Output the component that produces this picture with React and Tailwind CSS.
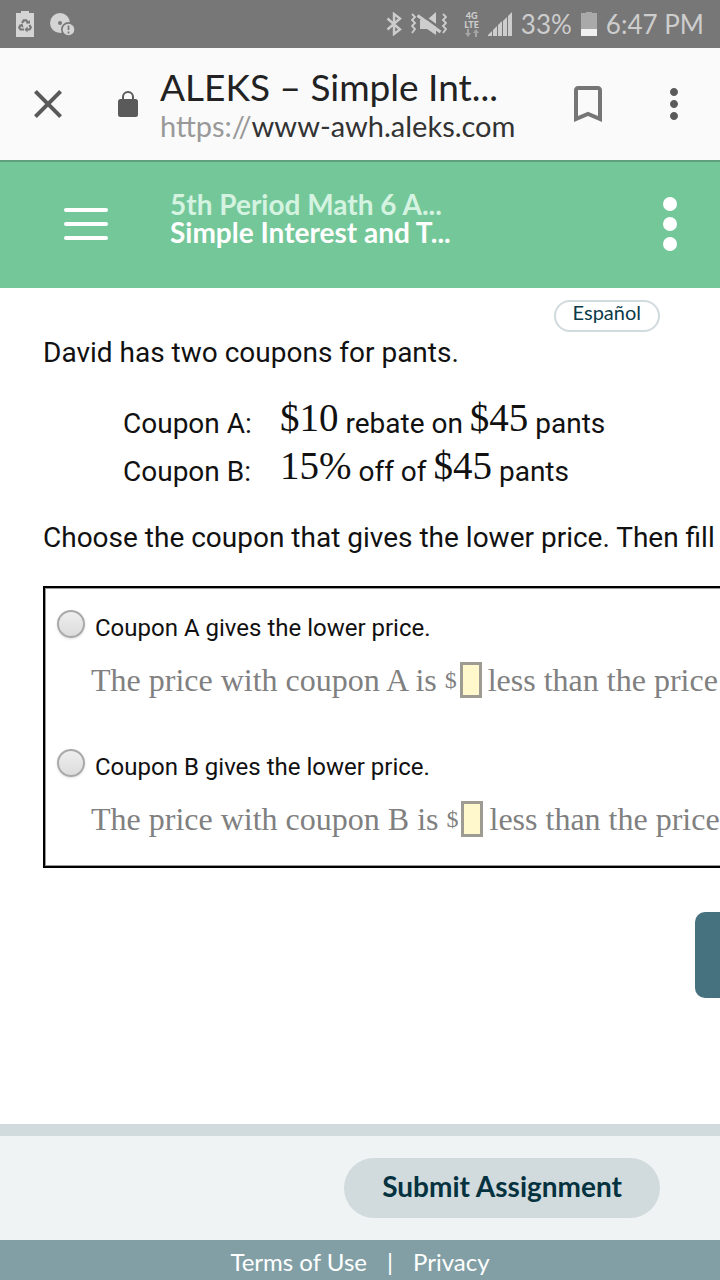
import React, { useState } from 'react';
import { MdClose, MdBookmarkBorder, MdMoreVert } from 'react-icons/md';

const options = [
  { id: 'A', offer: '$10', middle: 'rebate on', price: '$45' },
  { id: 'B', offer: '15%', middle: 'off of', price: '$45' },
];

const BatterySaverIcon = () => (
  <svg width="18" height="26" viewBox="0 0 18 26" aria-hidden="true">
    <path d="M0 2h5V0h8v2h5v24H0z" fill="#d4d4d4" />
    <g fill="none" stroke="#777" strokeWidth="2.2">
      <path d="M6 12l1.700-2.700h2.600l1.700 2.700" />
      <path d="M13.500 14l1.300 2.500-1.300 2h-2.500" />
      <path d="M8 18.500H4.500l-1.300-2 1.300-2" />
    </g>
    <path d="M10 12.500h4V9zM11.500 15.500v6l-3-3zM2.500 14l4-1.300 1 4z" fill="#777" />
  </svg>
);

const DiscAlertIcon = () => (
  <svg width="25" height="23" viewBox="0 0 25 23" aria-hidden="true">
    <circle cx="10" cy="10" r="10" fill="#d4d4d4" />
    <circle cx="10" cy="10" r="2" fill="#777" />
    <circle cx="18.500" cy="16.500" r="7.500" fill="#777" />
    <circle cx="18.500" cy="16.500" r="5.800" fill="#d4d4d4" />
    <path d="M18.500 12.500v4.500M18.500 18.500v2" stroke="#777" strokeWidth="1.700" />
  </svg>
);

const BluetoothIcon = () => (
  <svg width="16" height="24" viewBox="0 0 16 24" aria-hidden="true">
    <path
      d="M1.500 6.500l12.500 11-6 4.500V2l6 4.500-12.500 11"
      fill="none"
      stroke="#cdcdcd"
      strokeWidth="2.400"
    />
  </svg>
);

const VibrateMuteIcon = () => (
  <svg width="36" height="24" viewBox="0 0 36 24" aria-hidden="true">
    <path d="M9 8h7l9-8v23l-9-6H9z" fill="#cdcdcd" />
    <path d="M8 1l22 16" stroke="#777" strokeWidth="2.500" />
    <path d="M6.500 3.500l23 16.500" stroke="#cdcdcd" strokeWidth="3" />
    <path
      d="M1 2l3 3-3 3 3 3-3 3 3 3-3 4M32 2l3 3-3 3 3 3-3 3 3 3-3 4"
      fill="none"
      stroke="#cdcdcd"
      strokeWidth="1.800"
    />
  </svg>
);

const DataArrowsIcon = () => (
  <svg width="14" height="8" viewBox="0 0 14 8" aria-hidden="true" fill="#a6a6a6">
    <path d="M2 0h2v4h2L3 8 0 4h2zM10 8h2V4h2l-3-4-3 4h2z" />
  </svg>
);

const SignalIcon = () => (
  <svg width="24" height="24" viewBox="0 0 24 24" aria-hidden="true" fill="#cdcdcd">
    <path d="M0 24v-1l4-4v5zM5 24v-6l4-4v10zM10 24V13l4-4v15zM15 24V9l4-4v19zM20 24V4l4-4v24z" />
  </svg>
);

const BatteryIcon = () => (
  <svg width="16" height="24" viewBox="0 0 16 24" aria-hidden="true">
    <path d="M0 1h5V0h6v1h5v23H0z" fill="#a9a9a9" />
    <path d="M0 17h16v7H0z" fill="#efefef" />
  </svg>
);

const LockIcon = () => (
  <svg width="20" height="26" viewBox="0 0 20 26" className="shrink-0" aria-hidden="true">
    <path d="M5 9V6a5 5 0 0 1 10 0v3" fill="none" stroke="#5a5a5a" strokeWidth="2" />
    <rect y="8" width="20" height="18" rx="2.500" fill="#5a5a5a" />
  </svg>
);

const StatusBar = () => (
  <div className="flex h-12 items-center justify-between bg-[#777] px-4 font-['Lato',sans-serif] text-[26px] text-[#cdcdcd]">
    <div className="flex items-center gap-4">
      <BatterySaverIcon />
      <DiscAlertIcon />
    </div>
    <div className="flex items-center gap-[9px]">
      <BluetoothIcon />
      <VibrateMuteIcon />
      <div className="ml-2 flex flex-col items-center text-[9px] leading-[9px] font-black">
        <span>4G</span>
        <span>LTE</span>
        <DataArrowsIcon />
      </div>
      <SignalIcon />
      <span>33%</span>
      <BatteryIcon />
      <span>6:47 PM</span>
    </div>
  </div>
);

const BrowserBar = () => (
  <div className="flex h-28 items-center bg-[#fafafa] pr-[22px] pl-6 text-[#5a5a5a]">
    <button type="button" aria-label="Close tab">
      <MdClose size={48} />
    </button>
    <div className="ml-[46px]">
      <LockIcon />
    </div>
    <div className="ml-[22px] min-w-0 flex-1 pt-1 font-['Lato',sans-serif] whitespace-nowrap">
      <p className="text-[37px] leading-[40px] text-[#222]">ALEKS – Simple Int...</p>
      <p className="text-[29px] leading-[38px] text-[#999]">
        https://<span className="text-[#333]">www-awh.aleks.com</span>
      </p>
    </div>
    <button type="button" aria-label="Bookmark" className="mr-[38px] text-[#757575]">
      <MdBookmarkBorder size={48} />
    </button>
    <button type="button" aria-label="Browser menu">
      <MdMoreVert size={48} />
    </button>
  </div>
);

const CourseHeader = () => (
  <header className="flex h-32 items-center bg-[#74c798] pr-10 pl-16 font-['Lato',sans-serif] inset-shadow-[0_2px_0_#5f9f7e]">
    <button type="button" aria-label="Menu" className="flex w-11 flex-col gap-[10px]">
      <span className="h-1 rounded-full bg-white" />
      <span className="h-1 rounded-full bg-white" />
      <span className="h-1 rounded-full bg-white" />
    </button>
    <div className="mb-3 ml-[62px] flex-1 text-[28px] leading-[28px] font-bold">
      <p className="text-[#d5f3e1]">5th Period Math 6 A...</p>
      <h1 className="text-white">Simple Interest and T...</h1>
    </div>
    <button type="button" aria-label="More options" className="flex w-5 flex-col items-center gap-[6px]">
      <span className="h-[14px] w-[14px] rounded-full bg-white" />
      <span className="h-[14px] w-[14px] rounded-full bg-white" />
      <span className="h-[14px] w-[14px] rounded-full bg-white" />
    </button>
  </header>
);

const App = () => {
  const [choice, setChoice] = useState('');
  const [answers, setAnswers] = useState({ A: '', B: '' });

  return (
    <div className="flex min-h-screen flex-col bg-white font-['Roboto',sans-serif] text-[#111]">
      <StatusBar />
      <BrowserBar />
      <CourseHeader />

      <main className="flex-1 pt-3">
        <div className="flex justify-end pr-[60px]">
          <button
            type="button"
            className="h-8 rounded-full border-2 border-[#d1dadd] px-[17px] pb-2 font-['Lato',sans-serif] text-[20px] leading-[20px] text-[#0b3a48]"
          >
            Español
          </button>
        </div>

        {/* The question is wider than a phone and scrolls sideways */}
        <div className="overflow-x-auto pl-[43px] [scrollbar-width:none]">
          <div className="w-[860px]">
            <p className="text-[28px] leading-[42px]">David has two coupons for pants.</p>

            <ul className="mt-6 ml-20 text-[28px] leading-[48px]">
              {options.map(({ id, offer, middle, price }) => (
                <li key={id} className="flex h-12 items-baseline">
                  <span className="w-[157px]">Coupon {id}:</span>
                  <span>
                    <span className="align-[2px] font-['Liberation_Serif',serif] text-[39px] leading-[40px]">{offer}</span>{' '}
                    {middle}{' '}
                    <span className="align-[2px] font-['Liberation_Serif',serif] text-[39px] leading-[40px]">{price}</span>{' '}
                    pants
                  </span>
                </li>
              ))}
            </ul>

            <p className="mt-6 text-[28px] leading-[40px]">
              Choose the coupon that gives the lower price. Then fill
            </p>

            <form className="mt-7 flex flex-col gap-[50px] border-2 border-black px-3 pt-[22px] pb-7 inset-shadow-[0_0_0_1px_#999]">
              {options.map(({ id }) => (
                <div key={id}>
                  <div className="flex items-start gap-[10px]">
                    <input
                      type="radio"
                      id={`coupon-${id}`}
                      name="coupon"
                      value={id}
                      checked={choice === id}
                      onChange={(e) => setChoice(e.target.value)}
                      className="h-7 w-7 appearance-none rounded-full border-2 border-[#a9a9a9] bg-linear-to-b from-[#eee] to-[#dcdcdc] shadow-sm checked:bg-[#46717f]"
                    />
                    <label htmlFor={`coupon-${id}`} className="pt-1 text-[24px] leading-[28px]">
                      Coupon {id} gives the lower price.
                    </label>
                  </div>
                  <label className="mt-5 ml-[34px] flex items-center pb-px font-['Liberation_Serif',serif] text-[32px] leading-[36px] whitespace-nowrap text-[#808080]">
                    The price with coupon {id} is&nbsp;<span className="text-[24px]">$</span>
                    <input
                      type="text"
                      value={answers[id]}
                      onChange={(e) => setAnswers({ ...answers, [id]: e.target.value })}
                      className="mr-[6px] ml-[3px] h-9 w-[22px] border-3 border-[#9e9c92] bg-[#fff8cc]"
                    />
                    less than the price
                  </label>
                </div>
              ))}
            </form>

            <div className="mt-11 flex justify-end">
              <button type="button" aria-label="Check" className="h-[86px] w-[208px] rounded-[10px] bg-[#46717f]" />
            </div>
          </div>
        </div>
      </main>

      <div className="flex justify-end border-t-12 border-[#d1dadd] bg-[#eff3f4] pt-[22px] pr-[60px] pb-[22px]">
        <button
          type="button"
          className="h-[60px] rounded-full bg-[#d1dadd] px-[38px] pb-1 font-['Lato',sans-serif] text-[28px] font-bold text-[#05323f]"
        >
          Submit Assignment
        </button>
      </div>

      <footer className="flex h-10 items-center justify-center gap-5 bg-[#829fa6] pt-1 font-['Lato',sans-serif] text-[24px] text-white">
        <a href="#terms">Terms of Use</a>
        <span>|</span>
        <a href="#privacy">Privacy</a>
      </footer>
    </div>
  );
};

export default App;
